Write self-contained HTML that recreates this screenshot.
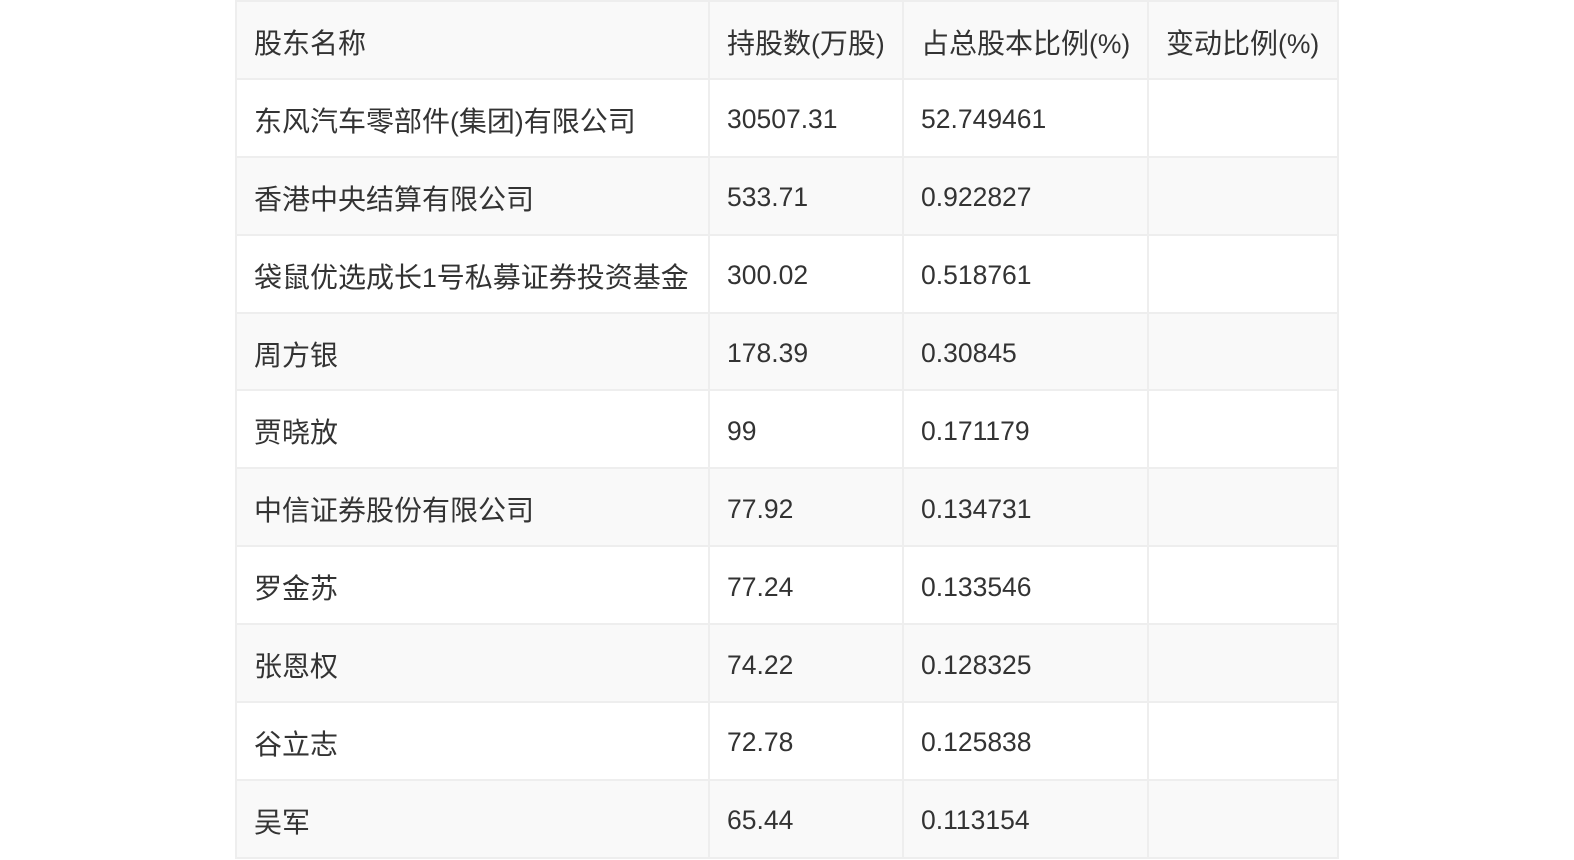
<!DOCTYPE html>
<html><head><meta charset="utf-8"><style>
body{margin:0;background:#fff;width:1574px;height:860px;overflow:hidden;font-family:"Liberation Sans","Noto Sans CJK SC",sans-serif;}
table{position:absolute;left:235px;top:0px;border-collapse:collapse;table-layout:fixed;}
td{border:2px solid #eeeeee;height:71.9px;padding:4px 0 0 17px;font-size:26.5px;color:#333;white-space:nowrap;vertical-align:middle;}
td span{font-size:28px;font-family:"Noto Sans CJK SC",sans-serif;}
tr:nth-child(odd) td{background:#f9f9f9;}
tr:nth-child(even) td{background:#fff;}
</style></head><body>
<table>
<colgroup><col style="width:473px"><col style="width:194px"><col style="width:245px"><col style="width:190px"></colgroup>
<tr><td><span>股东名称</span></td><td><span>持股数</span>(<span>万股</span>)</td><td><span>占总股本比例</span>(%)</td><td><span>变动比例</span>(%)</td></tr>
<tr><td><span>东风汽车零部件</span>(<span>集团</span>)<span>有限公司</span></td><td>30507.31</td><td>52.749461</td><td></td></tr>
<tr><td><span>香港中央结算有限公司</span></td><td>533.71</td><td>0.922827</td><td></td></tr>
<tr><td><span>袋鼠优选成长</span>1<span>号私募证券投资基金</span></td><td>300.02</td><td>0.518761</td><td></td></tr>
<tr><td><span>周方银</span></td><td>178.39</td><td>0.30845</td><td></td></tr>
<tr><td><span>贾晓放</span></td><td>99</td><td>0.171179</td><td></td></tr>
<tr><td><span>中信证券股份有限公司</span></td><td>77.92</td><td>0.134731</td><td></td></tr>
<tr><td><span>罗金苏</span></td><td>77.24</td><td>0.133546</td><td></td></tr>
<tr><td><span>张恩权</span></td><td>74.22</td><td>0.128325</td><td></td></tr>
<tr><td><span>谷立志</span></td><td>72.78</td><td>0.125838</td><td></td></tr>
<tr><td><span>吴军</span></td><td>65.44</td><td>0.113154</td><td></td></tr>
</table>
</body></html>
